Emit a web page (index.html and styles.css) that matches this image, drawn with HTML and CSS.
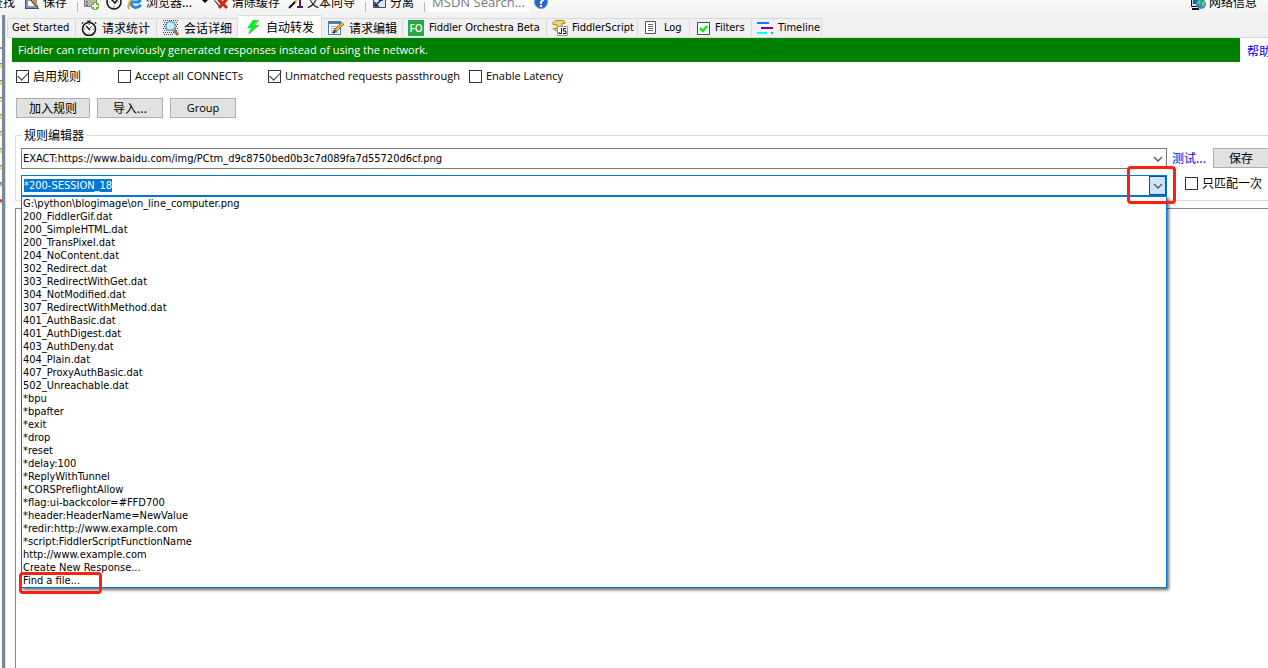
FILE: index.html
```html
<!DOCTYPE html>
<html lang="zh">
<head>
<meta charset="utf-8">
<title>Fiddler AutoResponder</title>
<link rel="stylesheet" href="styles.css">
</head>
<body>
<div class="app">
  <div class="splitter" aria-hidden="true"></div>
  <header class="toolbar">
    <button class="tool find">查找</button>
    <button class="tool save"><svg class="icon" viewBox="0 0 16 16"><path fill="#8093d0" d="M1 1h12v14H1z"/><path fill="#fff" d="M4 7h6v5H4z"/><path fill="#384c91" d="M1 1h1v13h13v1H1z"/><path stroke="#d5a231" stroke-width="3" d="M7 6l7 7"/><path stroke="#333" d="M6 5l8 9"/></svg>保存</button>
    <span class="sep"></span>
    <button class="tool shot" aria-label="截图"><svg class="icon" viewBox="0 0 16 16"><path fill="#b5b5b5" stroke="#777" d="M1.500 2.500h12v10h-12z"/><path fill="#777" d="M3 4h2v2H3zm0 3h2v2H3zm0 3h2v2H3z"/><circle cx="12" cy="12" r="4" fill="#65b819"/><path stroke="#fff" stroke-width="2" d="M12 9v6M9 12h6"/></svg></button>
    <button class="tool timer" aria-label="计时"><svg class="icon" viewBox="0 0 16 16"><circle cx="8" cy="8" r="7" fill="#fff" stroke="#111" stroke-width="1.500"/><path stroke="#25aacb" d="M8 3v1M8 12v2M3 8h1M12 8h1"/><path stroke="#111" stroke-width="1.500" d="M5 5l4 4 3-4"/></svg></button>
    <button class="tool browser"><svg class="icon" viewBox="0 0 16 16"><path fill="none" stroke="#2589df" stroke-width="3" d="M13 8H4c0-6 9-6 9 0M4 8c0 6 6 7 10 3"/><path fill="none" stroke="#e8a51c" stroke-width="2" d="M2 15C-1 9 8 1 15 2"/></svg>浏览器...<svg class="drop" viewBox="0 0 6 4"><path d="M0 0h6L3 3z"/></svg></button>
    <button class="tool clear"><svg class="icon" viewBox="0 0 16 16"><path fill="#ddd" stroke="#666" d="M1 6l5-5 6 6-5 6z"/><path stroke="#333" d="M2 7l6 7M4 5l6 7"/><path stroke="#d52515" stroke-width="3" d="M6 6l8 8M14 5l-8 9"/></svg>清除缓存</button>
    <button class="tool wizard"><svg class="icon" viewBox="0 0 16 16"><path stroke="#111" stroke-width="2" d="M1 14l7-7"/><path stroke="#e5c638" stroke-width="2" d="M7 8l2-2"/><path stroke="#60146b" stroke-width="2" d="M7 3h6M12 3v10M9 13h6"/></svg>文本向导</button>
    <span class="sep"></span>
    <button class="tool tear"><svg class="icon" viewBox="0 0 16 16"><path fill="#dceaff" stroke="#344d75" d="M2.500 1.500h12v12h-12z"/><path fill="none" stroke="#182842" stroke-width="1.500" d="M4 12l6-6M4 8v4h4M8 6h4"/></svg>分离</button>
    <span class="sep"></span>
    <input class="search" aria-label="MSDN Search" placeholder="MSDN Search...">
    <button class="tool help" aria-label="Help"><svg class="icon" viewBox="0 0 16 16"><circle cx="8" cy="8" r="6.500" fill="#2464d0" stroke="#7894bd"/><path fill="none" stroke="#fff" stroke-width="2" d="M6 6c0-3 5-2 4 0L8 8v2M8 11v2"/></svg></button>
    <button class="tool online"><svg class="icon" viewBox="0 0 16 16"><path fill="#c9e1ef" stroke="#111" d="M1.500.500h11v12h-11z"/><path fill="#29649a" d="M3 2h8v8H3z"/><path stroke="#111" stroke-width="2" d="M2 15h7"/><circle cx="11" cy="10" r="5" fill="#3288e1"/><path fill="#5bd35a" d="M7 8l3-2 1 3-2 2zm5 0l3-1v4l-3 2z"/></svg>网络信息</button>
  </header>
  <nav class="tabs">
    <button class="tab start">Get Started</button>
    <button class="tab stats"><svg class="icon" viewBox="0 0 16 16"><circle cx="8" cy="9" r="6.500" fill="#fff" stroke="#111" stroke-width="1.500"/><path fill="none" stroke="#111" d="M6 1h4M8 1v2M2 2L1 4M14 2l1 2"/><path stroke="#25aacb" stroke-width="1.500" d="M8 4v1M3 9h1M12 9h1M8 13v1"/><path stroke="#d22" d="M8 9l3-3"/><path stroke="#111" stroke-width="1.500" d="M5 6l4 4"/></svg><span class="cjk">请求统计</span></button>
    <button class="tab inspect"><svg class="icon" viewBox="0 0 16 16"><path stroke="#444" stroke-dasharray="1 1" d="M0 .500h15M1 2.500h14M0 4.500h15M1 6.500h14M0 8.500h15M1 10.500h14M0 12.500h12M1 14.500h10"/><circle cx="7.500" cy="6" r="4.500" fill="#c9eeff" stroke="#68a7d5" stroke-width="1.500"/><path stroke="#ab693d" stroke-width="3" d="M11 10l4 5"/></svg><span class="cjk">会话详细</span></button>
    <button class="tab active"><svg class="icon" viewBox="0 0 16 16"><path stroke="#777" d="M14 1l-4 5M14 6L4 15"/><path fill="#00f51b" d="M8 1h5L9 6h5L3 15l3-6H2z"/></svg><span class="cjk">自动转发</span></button>
    <button class="tab compose"><svg class="icon" viewBox="0 0 16 16"><path fill="#f7fbff" stroke="#477cae" d="M.500 1.500h12v13H.500z"/><path fill="#477cae" d="M0 1h13v3H0z"/><path stroke="#95b9d3" d="M3 6.500h5M3 8.500h4M3 10.500h3M3 12.500h7"/><path stroke="#8a6426" stroke-width="3.500" d="M15 3l-8 8"/><path stroke="#efb849" stroke-width="2" d="M15 3l-7 7"/><path stroke="#222" stroke-width="2" d="M7 11l-2 2"/></svg><span class="cjk">请求编辑</span></button>
    <button class="tab orchestra"><span class="fo">FO</span>Fiddler Orchestra Beta</button>
    <button class="tab script"><svg class="icon" viewBox="0 0 16 16"><path fill="#f4d374" stroke="#b58c1c" d="M3 .500h9l1 3h-3v7H3l-2-2h4v-4H1v-2z"/><path fill="#fff" stroke="#999" d="M5.500 6.500h10v9h-10z"/><path fill="none" stroke="#111" d="M9.500 8v5.500H7V12M14 8.500h-2.500V11H14v2.500h-3"/></svg>FiddlerScript</button>
    <button class="tab log"><svg class="icon" viewBox="0 0 16 16"><path fill="#fff" stroke="#555" d="M2.500 1.500h10v12h-10z"/><path stroke="#666" d="M5 4.500h5M5 6.500h5M5 8.500h5M5 10.500h5"/></svg>Log</button>
    <button class="tab filters"><svg class="icon" viewBox="0 0 16 16"><path fill="#fff" stroke="#22527c" d="M2.500 2.500h12v12h-12z"/><path fill="none" stroke="#00f51b" stroke-width="2.500" d="M5 8l3 3 4-5"/></svg>Filters</button>
    <button class="tab timeline"><svg class="icon" viewBox="0 0 16 16"><path fill="#087dff" d="M0 2h12v2H0z"/><path fill="#800080" d="M4 7h12v2H4z"/><path fill="#0ff" d="M0 12h10v2H0z"/><path fill="#0d2" d="M14 12h2v2h-2z"/></svg>Timeline</button>
  </nav>
  <main class="panel">
    <div class="notice"><p class="message">Fiddler can return previously generated responses instead of using the network.</p><a class="help-link cjk" href="#help">帮助</a></div>
    <div class="options">
      <label class="check enable"><input type="checkbox" checked><span class="cjk">启用规则</span></label>
      <label class="check connects"><input type="checkbox">Accept all CONNECTs</label>
      <label class="check unmatched"><input type="checkbox" checked>Unmatched requests passthrough</label>
      <label class="check"><input type="checkbox">Enable Latency</label>
    </div>
    <div class="actions"><button class="button wide cjk">加入规则</button><button class="button cjk">导入...</button><button class="button">Group</button></div>
    <fieldset class="editor">
      <legend class="cjk">规则编辑器</legend>
      <div class="fields">
        <div class="combo"><input class="field" aria-label="Match" value="EXACT:https://www.baidu.com/img/PCtm_d9c8750bed0b3c7d089fa7d55720d6cf.png"><button class="arrow" aria-label="Open matches"><svg class="icon" viewBox="0 0 16 16"><path stroke="#555" stroke-width="1.300" d="M4 6l4 4 4-4"/></svg></button></div>
        <div class="combo open"><div class="field" role="textbox" contenteditable="true" aria-label="Response"><span class="selected">*200-SESSION_18</span></div><button class="arrow" aria-label="Open responses"><svg class="icon" viewBox="0 0 16 16"><path stroke="#555" stroke-width="1.300" d="M4 6l4 4 4-4"/></svg></button>
          <ul class="menu" role="listbox">
            <li>G:\python\blogimage\on_line_computer.png</li>
            <li>200_FiddlerGif.dat</li>
            <li>200_SimpleHTML.dat</li>
            <li>200_TransPixel.dat</li>
            <li>204_NoContent.dat</li>
            <li>302_Redirect.dat</li>
            <li>303_RedirectWithGet.dat</li>
            <li>304_NotModified.dat</li>
            <li>307_RedirectWithMethod.dat</li>
            <li>401_AuthBasic.dat</li>
            <li>401_AuthDigest.dat</li>
            <li>403_AuthDeny.dat</li>
            <li>404_Plain.dat</li>
            <li>407_ProxyAuthBasic.dat</li>
            <li>502_Unreachable.dat</li>
            <li>*bpu</li>
            <li>*bpafter</li>
            <li>*exit</li>
            <li>*drop</li>
            <li>*reset</li>
            <li>*delay:100</li>
            <li>*ReplyWithTunnel</li>
            <li>*CORSPreflightAllow</li>
            <li>*flag:ui-backcolor=#FFD700</li>
            <li>*header:HeaderName=NewValue</li>
            <li>*redir:http://www.example.com</li>
            <li>*script:FiddlerScriptFunctionName</li>
            <li>http://www.example.com</li>
            <li>Create New Response...</li>
            <li class="find-file">Find a file...<span class="mark mark-file"></span></li>
          </ul>
          <span class="mark mark-arrow"></span>
        </div>
      </div>
      <div class="side">
        <div class="side-row"><a class="test cjk" href="#test">测试...</a><button class="button save-rule cjk">保存</button></div>
        <label class="check once"><input type="checkbox"><span class="cjk">只匹配一次</span></label>
      </div>
    </fieldset>
    <section class="rules" aria-label="Rules"></section>
  </main>
</div>
</body>
</html>
```
FILE: styles.css
```css
* { box-sizing: border-box; }
body { margin: 0; background: #fff; color: #000; font: 11px/16px "Open Sans", "Noto Sans CJK SC", sans-serif; overflow: hidden; }
button, input { margin: 0; font: inherit; color: inherit; }
button { border: 0; padding: 0; background: none; white-space: nowrap; }
a { color: #00f; text-decoration: none; white-space: nowrap; }
.cjk { font-family: "Noto Sans CJK SC", sans-serif; font-size: 12px; }
.icon { width: 16px; height: 16px; flex: none; fill: none; }

.app { display: grid; grid-template: 18px 20px 1fr / 7px minmax(0, 1fr); height: 100vh; }

/* Edge of the session list, with the divider beside it */
.splitter {
  grid-area: 1 / 1 / 4 / 2;
  z-index: 1;
  margin-top: 15px;
  background:
    linear-gradient(90deg, transparent 2px, #778899 2px 5px, #ddd 5px 6px, #fff 6px),
    linear-gradient(#c6f, #c6f) 0 32px / 2px 2px no-repeat,
    linear-gradient(#c6f, #c6f) 0 168px / 2px 2px no-repeat,
    linear-gradient(#f22, #f22) 0 185px / 2px 2px no-repeat,
    repeating-linear-gradient(#fff 0 12px, #888 12px 13px, #f5cf8c 13px 17px) 0 36px / 2px 153px no-repeat;
}

/* Toolbar */
.toolbar { grid-area: 1 / 1 / 2 / 3; display: flex; align-items: flex-end; padding-bottom: 6px; overflow: hidden; background: linear-gradient(#fafafa, #f0f0f0); font-size: 12px; }
.tool { display: flex; align-items: center; gap: 3px; flex: none; height: 20px; font-family: "Noto Sans CJK SC", sans-serif; }
.sep { width: 1px; height: 10px; margin: 0 5px 0 10px; background: #bbb; flex: none; }
.find { width: 15px; justify-content: flex-end; margin-right: 9px; }
.timer { margin: 0 5px 0 7px; }
.drop { width: 6px; height: 4px; margin: 0 5px 0 7px; }
.clear { margin-right: 8px; }
.search { width: 100px; height: 20px; margin: 0 4px 0 -1px; border: 0; background: #fff; padding: 0 3px; font-size: 13px; flex: none; }
.search::placeholder { color: #777; opacity: 1; }
.online { margin-left: auto; margin-right: 11px; }

/* Tabs */
.tabs { grid-area: 2 / 2 / 3 / 3; display: flex; background: linear-gradient(#d9d9d9, #d9d9d9) 0 100% / 100% 1px no-repeat #f0f0f0; padding-bottom: 1px; font-family: "DejaVu Sans Condensed", "DejaVu Sans", sans-serif; }
.tab { display: flex; align-items: center; gap: 5px; flex: none; border: 1px solid #d9d9d9; border-width: 1px 1px 0 0; padding: 0 0 0 5px; }
.start { width: 69px; border-left-width: 1px; padding-left: 4px; }
.stats, .compose, .inspect { width: 81px; }
.inspect, .compose { padding-left: 6px; }
.active { width: 84px; background: #fff; margin: -3px 0 -1px; padding-left: 7px; }
.orchestra { width: 144px; }
.script { width: 91px; gap: 4px; }
.log { width: 52px; }
.filters { width: 62px; gap: 4px; }
.timeline { width: 70px; }
.fo { height: 16px; width: 16px; background: #27a844; color: #fff; font: 600 10px/16px "Open Sans", sans-serif; text-align: center; }

/* Rule panel */
.panel { grid-area: 3 / 2 / 4 / 3; display: flex; flex-direction: column; min-height: 0; }
.notice { display: flex; flex: none; height: 24px; padding-left: 5px; }
.message { flex: 1; margin: 0; padding: 4px 6px; background: #008000; color: #fff; }
.help-link { width: 28px; padding: 5px 0 0 7px; overflow: hidden; }
.options { display: flex; padding: 6px 9px 0; }
.check { display: flex; align-items: center; gap: 4px; flex: none; height: 16px; white-space: nowrap; }
.check input { display: grid; place-items: center; appearance: none; width: 13px; height: 13px; border: 1px solid #333; background: #fff; }
.check input:checked::before { content: ""; width: 9px; height: 5px; border: solid #333; border-width: 0 0 1px 1px; transform: translateY(-1px) rotate(-45deg); }
.enable { width: 102px; }
.connects { width: 150px; }
.unmatched { width: 201px; }
.actions { display: flex; gap: 7px; padding: 14px 9px 0; }
.button { height: 20px; width: 66px; border: 1px solid #adadad; background: #e1e1e1; }
.wide { width: 74px; }

.editor { display: flex; min-width: 0; margin: 9px 0 0 8px; padding: 5px 0 3px 5px; border: 1px solid #dcdcdc; border-right: 0; }
.editor legend { margin-left: 1px; padding: 0 2px; }
.fields { display: flex; flex-direction: column; gap: 6px; flex: 1; min-width: 0; font: 11px/13px "DejaVu Sans Condensed", "DejaVu Sans", sans-serif; }
.combo { position: relative; display: flex; height: 21px; border: 1px solid #777; background: #fff; }
.field { flex: 1; min-width: 0; border: 0; padding: 0 1px; background: none; outline: 0; }
.arrow { display: grid; place-items: center; width: 17px; }
.open { height: 22px; border-color: #0078d7; border-bottom-width: 2px; }
.open .field { padding: 3px 2px; }
.open .arrow { background: #cce4f7; border: 1px solid #005499; }
.selected { background: #0078d7; color: #fff; }
.menu { position: absolute; top: 20px; left: -1px; right: -1px; margin: 0; padding: 0 0 0 1px; list-style: none; background: #fff; border: 1px solid #0078d7; box-shadow: 2px 2px 3px #0009; }
.mark { position: absolute; border: 3px solid #ff2014; border-radius: 4px; pointer-events: none; }
.mark-arrow { top: -10px; right: -10px; width: 49px; height: 38px; }
.find-file { position: relative; }
.mark-file { top: -2px; left: -4px; width: 83px; height: 22px; }
.side { display: flex; flex-direction: column; width: 101px; flex: none; }
.side-row { display: flex; align-items: center; justify-content: space-between; padding-left: 5px; }
.save-rule { width: 55px; border-right: 0; }
.once { margin: 7px 0 0 18px; }
.rules { flex: 1; margin: 7px 0 0 8px; border: solid #828790; border-width: 1px 0 0 1px; }
```
